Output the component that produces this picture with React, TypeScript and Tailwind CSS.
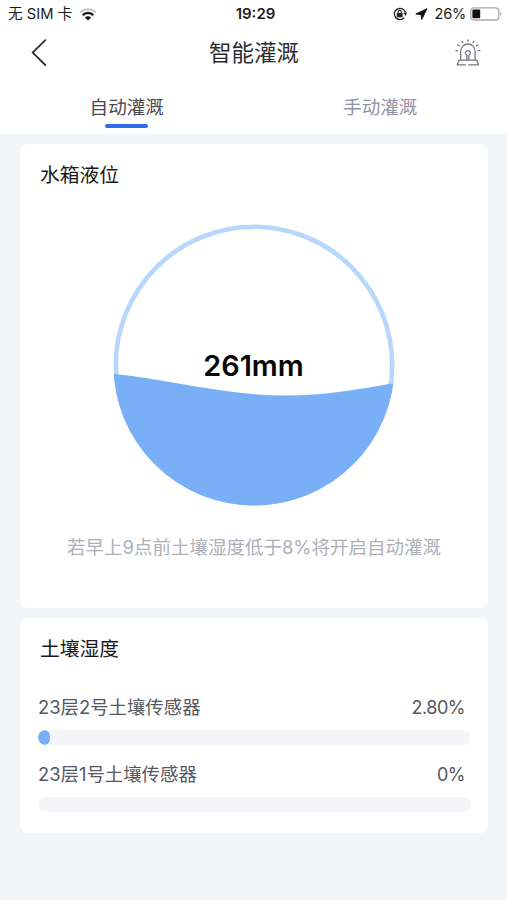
import React from 'react';

const sensors = [
  { name: '23层2号土壤传感器', value: '2.80%', percent: 2.8 },
  { name: '23层1号土壤传感器', value: '0%', percent: 0 },
];

const StatusBar = () => (
  <div className="flex h-7 items-center text-[14.7px] leading-7 text-[#1c1c1c]">
    <div className="flex flex-1 items-center gap-[7px] pl-2">
      <span className="whitespace-nowrap">无 SIM 卡</span>
      <svg width="18" height="13" viewBox="0 0 18 13" fill="none">
        <path d="M1.3 4.4a10.9 10.9 0 0 1 15.4 0" stroke="#c4c4c4" strokeWidth="2" />
        <path d="M3.8 7.1a7.3 7.3 0 0 1 10.4 0" stroke="#111" strokeWidth="2.3" />
        <path d="M5.9 9.5a4.4 4.4 0 0 1 6.2 0L9 12.4z" fill="#111" />
      </svg>
    </div>
    <span className="pl-px text-[15px] font-semibold">19:29</span>
    <div className="flex flex-1 items-center justify-end pr-[5px]">
      <svg width="14" height="14" viewBox="0 0 14 14" fill="none">
        <path d="M11.2 10.6A5.6 5.6 0 1 1 12.2 5" stroke="#222" strokeWidth="1.3" />
        <path d="M10.2 5.6H14l-1.4 3.3z" fill="#222" />
        <rect x="3.8" y="5.9" width="5.8" height="4.3" rx=".5" fill="#222" />
        <path d="M5.1 6.3V5a1.6 1.6 0 0 1 3.2 0v1.3" stroke="#222" strokeWidth="1.1" />
      </svg>
      <svg className="ml-2" width="13" height="12" viewBox="0 0 13 12">
        <path
          d="M12 .7.8 6l5.4.7.5 4.9z"
          fill="#111"
          stroke="#111"
          strokeWidth=".9"
          strokeLinejoin="round"
        />
      </svg>
      <span className="ml-[7px] text-[14.5px] tracking-[-0.2px]">26%</span>
      <svg className="ml-1" width="32" height="14" viewBox="0 0 32 14" fill="none">
        <rect x=".8" y=".8" width="28" height="12.2" rx="3" stroke="#aaa" strokeWidth="1.3" />
        <rect x="2.4" y="2.5" width="7.8" height="8.8" rx="1" fill="#111" />
        <path d="M30.2 4.7c1.5.8 1.5 3.6 0 4.4z" fill="#aaa" />
      </svg>
    </div>
  </div>
);

const AlarmIcon = () => (
  <svg width="26" height="28" viewBox="0 0 26 28" fill="none" stroke="#74777e" strokeWidth="1.3" strokeLinecap="round">
    <path d="M5.7 21v-8.8a7.2 7.2 0 0 1 14.4 0V21" />
    <path d="M10.5 25.8H2.3l1.6-4.6h18l1.6 4.6h-9.8" strokeLinejoin="round" />
    <path d="M11.9 21v-4.7a2.4 2.4 0 1 1 2 0V21" />
    <path d="M12.9 1v1.6M7 2.2l.8 1.5M18.8 2.2 18 3.7M2.8 6l1.4.9M23 6l-1.4.9M1 11.7h1.6M24.8 11.7h-1.6" />
  </svg>
);

const WaterLevel = () => (
  <svg width="282" height="282" viewBox="0 0 282 282" className="block">
    <defs>
      <clipPath id="tank">
        <circle cx="141" cy="141" r="140.5" />
      </clipPath>
    </defs>
    <circle cx="141" cy="141" r="138.2" fill="none" stroke="#b7d7fc" strokeWidth="4.6" />
    <path
      d="M0 149.8C54 155 112 171.5 172 171.5C212 171.5 248 165 282 159V282H0z"
      fill="#78aff6"
      clipPath="url(#tank)"
    />
    <text x="140.5" y="151.5" textAnchor="middle" fill="#050505" className="text-[28.8px] font-semibold">
      261mm
    </text>
  </svg>
);

export default function App() {
  return (
    <div className="min-h-[900px] w-full bg-[#f3f6f9] font-['Inter','Noto_Sans_CJK_SC',sans-serif]">
      <header className="h-[134px] bg-white">
        <StatusBar />
        <div className="flex h-[50px] items-center justify-between pr-[26px] pl-[31px]">
          <svg width="17" height="28" viewBox="0 0 17 28" fill="none">
            <path d="M14.3 1.2 1.7 13.6l12.6 12.4" stroke="#2c2e33" strokeWidth="1.8" strokeLinecap="round" />
          </svg>
          <h1 className="pl-[5px] text-[22.5px] leading-none text-[#2b2c30]">智能灌溉</h1>
          <AlarmIcon />
        </div>
        <nav className="flex h-14 text-[18.6px]">
          <div className="flex flex-1 flex-col items-center pt-[15px]">
            <span className="leading-7 text-[#484b54]">自动灌溉</span>
            <span className="mt-[3px] h-1 w-[43px] rounded-full bg-[#2f6be9]" />
          </div>
          <div className="flex flex-1 flex-col items-center pt-[15px]">
            <span className="leading-7 text-[#9294a3]">手动灌溉</span>
          </div>
        </nav>
      </header>

      <main className="flex flex-col gap-2.5 pt-2.5 pr-[19px] pl-5">
        <section className="flex h-[464px] flex-col items-center rounded-lg bg-white">
          <h2 className="w-full pt-[17px] pl-5 text-[19.8px] leading-7 text-[#17181a]">水箱液位</h2>
          <div className="mt-[35px]">
            <WaterLevel />
          </div>
          <p className="mt-[27px] text-[18.5px] leading-7 whitespace-nowrap text-[#adb0b8]">
            若早上9点前土壤湿度低于8%将开启自动灌溉
          </p>
        </section>

        <section className="h-[215px] rounded-lg bg-white pr-[17px] pl-[18px]">
          <h2 className="pt-[17px] pl-0.5 text-[19.8px] leading-7 text-[#17181a]">土壤湿度</h2>
          <div className="mt-[30px] flex flex-col gap-[15px]">
            {sensors.map((sensor) => (
              <div key={sensor.name}>
                <div className="flex justify-between pr-1.5 text-[18.4px] leading-7 text-[#55585f]">
                  <span>{sensor.name}</span>
                  <span className="pt-px text-[18px] leading-[27px] tracking-[-0.5px]">{sensor.value}</span>
                </div>
                <div className="mt-[9px] h-[15px] overflow-hidden rounded-full bg-[#f3f5f8]">
                  <div className="h-full rounded-full bg-[#78aff6]" style={{ width: `${sensor.percent}%` }} />
                </div>
              </div>
            ))}
          </div>
        </section>
      </main>
    </div>
  );
}
